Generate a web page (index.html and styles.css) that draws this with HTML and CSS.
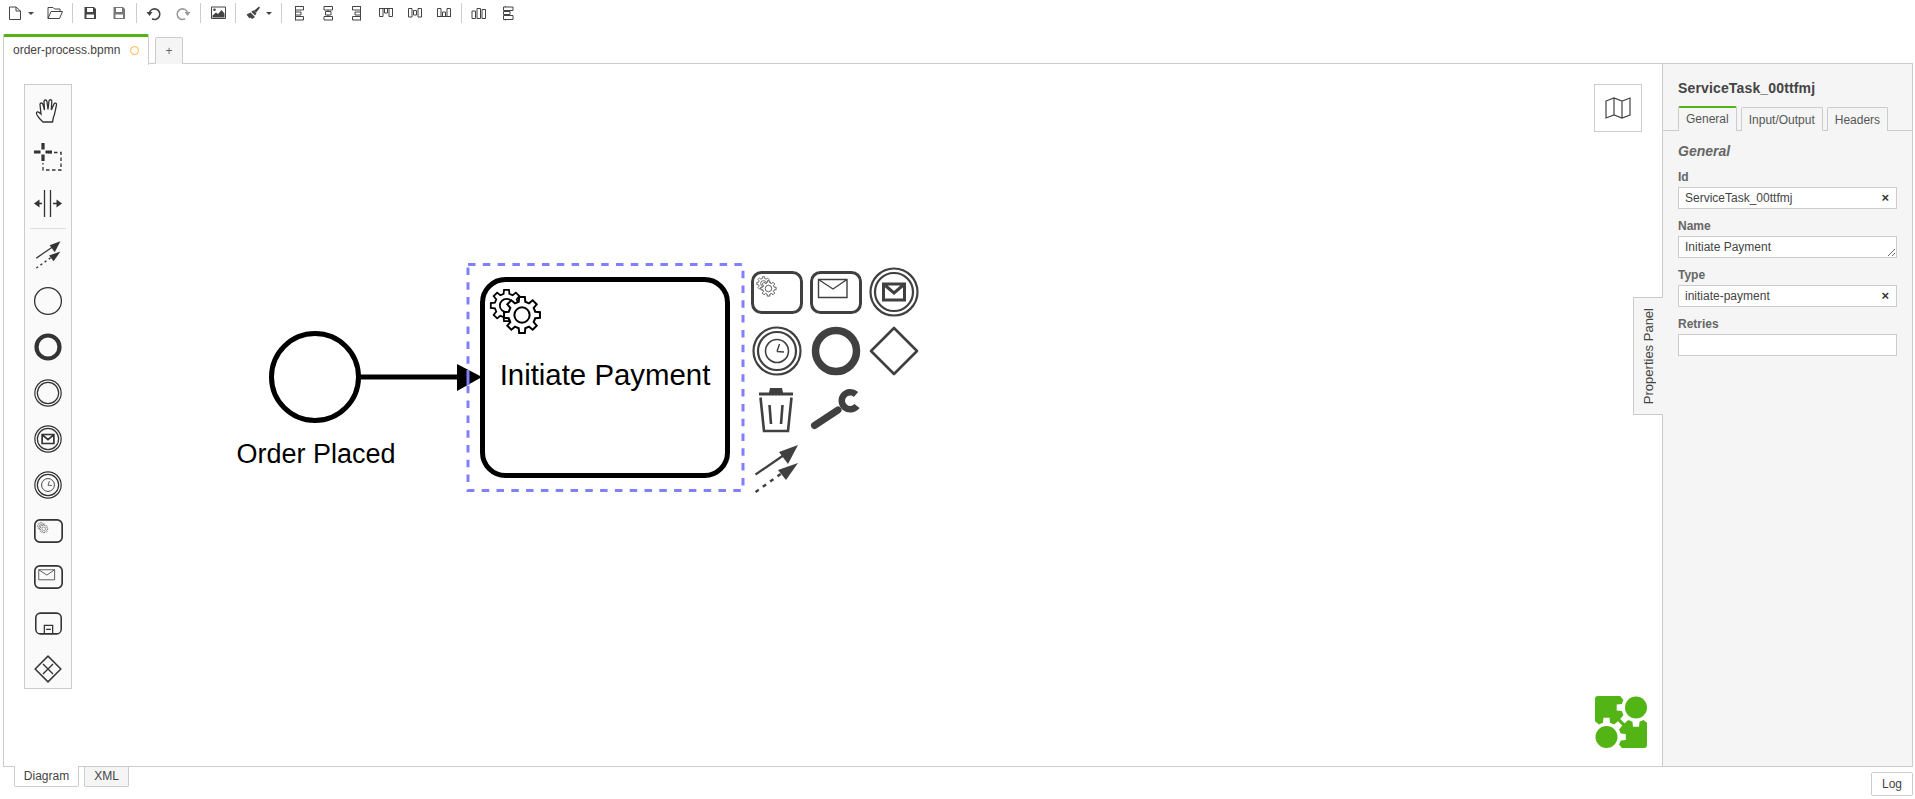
FILE: index.html
```html
<!DOCTYPE html>
<html lang="en">
<head>
    <meta charset="UTF-8">
    <title>order-process.bpmn</title>
    <link rel="stylesheet" href="styles.css">
</head>
<body>
    <!-- shared shapes for palette and context pad -->
    <svg class="defs">
        <symbol id="gear" viewBox="-11 -11 22 22">
            <polygon points="7.28,-1.81 9.88,-1.56 9.88,1.56 7.28,1.81 6.43,3.87 8.09,5.88 5.88,8.09 3.87,6.43 1.81,7.28 1.56,9.88 -1.56,9.88 -1.81,7.28 -3.87,6.43 -5.88,8.09 -8.09,5.88 -6.43,3.87 -7.28,1.81 -9.88,1.56 -9.88,-1.56 -7.28,-1.81 -6.43,-3.87 -8.09,-5.88 -5.88,-8.09 -3.87,-6.43 -1.81,-7.28 -1.56,-9.88 1.56,-9.88 1.81,-7.28 3.87,-6.43 5.88,-8.09 8.09,-5.88 6.43,-3.87"/>
            <circle r="4.2"/>
        </symbol>
        <symbol id="service-task" viewBox="0 0 52 43">
            <rect x="1.5" y="1.5" width="49" height="40" rx="9" fill="none" stroke-width="3"/>
            <use href="#gear" x="5" y="5" width="15" height="15" stroke-width="1.1" fill="none"/>
            <use href="#gear" x="9" y="9" width="17" height="17" stroke-width="1.1" fill="#fff"/>
        </symbol>
        <symbol id="message-task" viewBox="0 0 52 43">
            <rect x="1.5" y="1.5" width="49" height="40" rx="9" fill="none" stroke-width="3"/>
            <path d="M8.5 8.5H37V26.5H8.5ZM8.5 8.5L23 18L37 8.5" fill="none" stroke-width="1.4"/>
        </symbol>
        <symbol id="sub-process" viewBox="0 0 52 43">
            <rect x="1.5" y="1.5" width="49" height="40" rx="9" fill="none" stroke-width="3"/>
            <path d="M18 41V25H34V41M21.5 33H30.5" fill="none" stroke-width="2.4"/>
        </symbol>
        <symbol id="rings" viewBox="0 0 50 50">
            <circle cx="25" cy="25" r="23.5" fill="none" stroke-width="2.2"/>
            <circle cx="25" cy="25" r="19" fill="none" stroke-width="2.2"/>
        </symbol>
        <symbol id="message-event" viewBox="0 0 50 50">
            <use href="#rings" width="50" height="50"/>
            <path d="M14.5 17H35.5V33H14.5ZM14.5 17L25 26L35.5 17" fill="none" stroke-width="3"/>
        </symbol>
        <symbol id="timer-event" viewBox="0 0 50 50">
            <use href="#rings" width="50" height="50"/>
            <circle cx="25" cy="25" r="11.5" fill="none" stroke-width="1.6"/>
            <path d="M25 25.5L27.5 18M25 25.5L32 26" fill="none" stroke-width="1.4"/>
        </symbol>
        <symbol id="end-event" viewBox="0 0 50 50">
            <circle cx="25" cy="25" r="20.5" fill="none" stroke-width="7.5"/>
        </symbol>
        <symbol id="gateway" viewBox="0 0 50 50">
            <path d="M25 2L48 25L25 48L2 25Z" fill="none" stroke-width="2.6" stroke-linejoin="round"/>
        </symbol>
        <symbol id="connect" viewBox="0 0 44 48">
            <path d="M0.5 29.5L29 10" fill="none" stroke-width="2.2"/>
            <path d="M43 0L33 19L24 7Z" stroke="none"/>
            <path d="M0.5 47L27 28" fill="none" stroke-width="2.4" stroke-dasharray="4 5"/>
            <path d="M43 18L31 35L23 25Z" stroke="none"/>
        </symbol>
    </svg>

    <div class="toolbar">
        <div class="tool-group first">
            <button class="tool tool-wide">
                <svg class="ico" viewBox="0 0 18 18"><path d="M3.5 3H10L14.5 7V15.5H3.5ZM10 3V7H14.5"/></svg>
                <span class="caret"></span>
            </button>
            <button class="tool">
                <svg class="ico" viewBox="0 0 18 18"><path d="M2 14.5V3.5H7L8.5 5H14V7.5M2 14.5L5 7.5H16.5L13.5 14.5Z"/></svg>
            </button>
        </div>
        <div class="tool-group">
            <button class="tool">
                <svg class="ico solid" viewBox="0 0 18 18"><path fill-rule="evenodd" d="M3.5 3H13L15 5V15H3.5ZM6 4V8H12V4ZM5.5 10.5V14H13V10.5Z"/></svg>
            </button>
            <button class="tool">
                <svg class="ico solid soft" viewBox="0 0 18 18"><path fill-rule="evenodd" d="M3.5 3H13L15 5V15H3.5ZM6 4V8H12V4ZM5.5 10.5V14H13V10.5Z"/></svg>
            </button>
        </div>
        <div class="tool-group">
            <button class="tool">
                <svg class="ico thick" viewBox="0 0 18 18"><path d="M4.5 8.5A5.3 5.3 0 1 1 7 14.8"/><path class="fill" d="M1.5 8H7.5L4.5 12Z"/></svg>
            </button>
            <button class="tool">
                <svg class="ico thick faded" viewBox="0 0 18 18"><path d="M13.5 8.5A5.3 5.3 0 1 0 11 14.8"/><path class="fill" d="M16.5 8H10.5L13.5 12Z"/></svg>
            </button>
        </div>
        <div class="tool-group">
            <button class="tool">
                <svg class="ico" viewBox="0 0 18 18"><path d="M2.5 3H16.5V14.5H2.5Z"/><path class="fill" d="M3.5 13.5V11.5L7 8.5L9 10L12.5 6L15.5 9.5V13.5Z"/><circle class="fill" cx="5.5" cy="5.8" r="1.3"/></svg>
            </button>
        </div>
        <div class="tool-group">
            <button class="tool tool-brush">
                <svg class="ico solid" viewBox="0 0 18 18"><path d="M15 2.5L16 3.8L12 8.8L10 6.8ZM9.3 6.3L12.5 9.5L11 11.5L7.3 7.8ZM6.5 8.5L11 13L8 15L6.5 13.5L5.5 14.5L2.5 10.5Z"/></svg>
                <span class="caret"></span>
            </button>
        </div>
        <div class="tool-group">
            <button class="tool"><svg class="ico" viewBox="0 0 18 18"><path d="M5.5 2V16.5M5.5 2.5H13.5V6H5.5M5.5 8H11V11H5.5M5.5 12.5H13.5V16H5.5"/></svg></button>
            <button class="tool"><svg class="ico" viewBox="0 0 18 18"><path d="M5 2.5H13.5V6H5ZM6.5 7.5H12V11H6.5ZM5 12.5H13.5V16H5ZM9 6V7.5M9 11V12.5"/></svg></button>
            <button class="tool"><svg class="ico" viewBox="0 0 18 18"><path d="M12.5 2V16.5M12.5 2.5H4.5V6H12.5M12.5 8H7V11H12.5M12.5 12.5H4.5V16H12.5"/></svg></button>
            <button class="tool"><svg class="ico" viewBox="0 0 18 18"><path d="M2 4.5H16M2.5 4.5V12.5H6V4.5M7.5 4.5V9H10.5V4.5M12 4.5V12.5H15.5V4.5"/></svg></button>
            <button class="tool"><svg class="ico" viewBox="0 0 18 18"><path d="M2.5 4.5H6V13H2.5ZM7.5 6.5H10.5V11H7.5ZM12 4.5H15.5V13H12Z"/></svg></button>
            <button class="tool"><svg class="ico" viewBox="0 0 18 18"><path d="M2 12.5H16M2.5 12.5V4.5H6V12.5M7.5 12.5V8H10.5V12.5M12 12.5V4.5H15.5V12.5"/></svg></button>
        </div>
        <div class="tool-group last">
            <button class="tool"><svg class="ico" viewBox="0 0 18 18"><path d="M2 7H5.5V14.5H2ZM7 4.5H10.5V14.5H7ZM12 5.5H15.5V14.5H12Z"/></svg></button>
            <button class="tool"><svg class="ico" viewBox="0 0 18 18"><path d="M4.5 3H14V6.5H4.5ZM4.5 7.5H11V10.5H4.5ZM4.5 11.5H14V15.5H4.5ZM6.5 6.5V7.5M6.5 10.5V11.5M6.5 2V3M6.5 15.5V16.5"/></svg></button>
        </div>
    </div>

    <div class="tab-bar">
        <div class="file-tab active">order-process.bpmn<span class="dirty"></span></div>
        <div class="file-tab add">+</div>
    </div>

    <div class="workspace">
        <div class="canvas">
            <svg class="diagram" width="1658" height="703">
                <g transform="translate(-4 -64)">
                    <rect class="selection" x="468" y="264.5" width="275" height="226"/>
                    <circle class="shape" cx="315" cy="377" r="43.5"/>
                    <path class="flow" d="M360 377H460"/>
                    <rect class="shape" x="482.5" y="279.5" width="245" height="196" rx="23"/>
                    <path class="arrow" d="M457 364L482 377L457 391Z"/>
                    <path class="selection-over" d="M468 370V385"/>
                    <use class="gear-big" href="#gear" x="489" y="288" width="35" height="35" fill="none"/>
                    <use class="gear-big" href="#gear" x="502" y="295" width="40" height="40" fill="#fff"/>
                    <text class="label" x="605" y="385" font-size="29.4">Initiate Payment</text>
                    <text class="label" x="316" y="463" font-size="27">Order Placed</text>

                    <g class="pad">
                        <use href="#service-task" x="751" y="271" width="52" height="43"/>
                        <use href="#message-task" x="810" y="271" width="52" height="43"/>
                        <use href="#message-event" x="869" y="267" width="50" height="50"/>
                        <use href="#timer-event" x="752" y="326" width="50" height="50"/>
                        <use href="#end-event" x="811" y="326" width="50" height="50"/>
                        <use href="#gateway" x="869" y="326" width="50" height="50"/>
                        <g transform="translate(758 388)">
                            <path class="trash-fill" d="M12 0H24L25 4.5H35V7.5H1V4.5H11Z"/>
                            <path class="trash" d="M2.5 9.5L6 43H30L33.5 9.5M11.5 17L13 36M24.5 17L23 36"/>
                        </g>
                        <g transform="translate(811 391)">
                            <path class="wrench" d="M3.5 34.5L27 19"/>
                            <path class="wrench-head" d="M45 3.5A8.5 8.5 0 1 0 46 15"/>
                        </g>
                        <use href="#connect" x="755" y="445" width="44" height="48"/>
                    </g>

                    <g class="logo">
                        <rect class="logo-bg" x="1595" y="696" width="52" height="52" rx="3"/>
                        <use class="logo-gear" href="#gear" x="1614.5" y="686" width="43" height="43"/>
                        <use class="logo-gear" href="#gear" x="1585" y="715.5" width="43" height="43"/>
                        <circle class="logo-bg" cx="1636" cy="707.5" r="11"/>
                        <circle class="logo-bg" cx="1606.5" cy="737" r="11"/>
                    </g>
                </g>
            </svg>

            <div class="palette">
                <div class="pal-item">
                    <svg class="pal-ico line" viewBox="0 0 38 38"><path d="M14 30L11 27C9 24.5 7 22.5 7.5 20.5C8.5 19 10.5 20.5 12 22L11 12.5C11 10.5 13.5 10.5 14 12.5L15.5 18L15 9.5C15 7.5 17.5 7.5 18 9.5L19 17.5L20 9C20.3 7 23 7.5 22.8 9.5L22.3 18L25 12C25.7 10.5 28 11 27.5 13C26.5 17 26 22 24.5 25L23.5 30Z"/></svg>
                </div>
                <div class="pal-item">
                    <svg class="pal-ico line" viewBox="0 0 38 38"><path class="plus" d="M14 5V11.5M14 16.5V23M5 14H11.5M16.5 14H23"/><path d="M19 14.5H32V32H14V25" stroke-dasharray="3.5 2.5"/></svg>
                </div>
                <div class="pal-item">
                    <svg class="pal-ico line" viewBox="0 0 38 38"><path d="M15.5 6V33M21.5 6V33M9 19.5H13M24 19.5H28"/><path class="fill" d="M5 19.5L10.5 15.5V23.5ZM33 19.5L27.5 15.5V23.5Z"/></svg>
                </div>
                <div class="pal-sep"></div>
                <div class="pal-item"><svg class="pal-use" width="25" height="28"><use href="#connect" width="25" height="28"/></svg></div>
                <div class="pal-item"><svg class="pal-ico line" viewBox="0 0 38 38"><circle cx="19" cy="19" r="13.4"/></svg></div>
                <div class="pal-item"><svg class="pal-use" width="28" height="28"><use href="#end-event" width="28" height="28"/></svg></div>
                <div class="pal-item"><svg class="pal-use" width="28" height="28"><use href="#rings" width="28" height="28"/></svg></div>
                <div class="pal-item"><svg class="pal-use" width="28" height="28"><use href="#message-event" width="28" height="28"/></svg></div>
                <div class="pal-item"><svg class="pal-use" width="28" height="28"><use href="#timer-event" width="28" height="28"/></svg></div>
                <div class="pal-item"><svg class="pal-use" width="29" height="24"><use href="#service-task" width="29" height="24"/></svg></div>
                <div class="pal-item"><svg class="pal-use" width="29" height="24"><use href="#message-task" width="29" height="24"/></svg></div>
                <div class="pal-item"><svg class="pal-use" width="27" height="23"><use href="#sub-process" width="27" height="23"/></svg></div>
                <div class="pal-item">
                    <svg class="pal-use" width="28" height="28"><use href="#gateway" width="28" height="28"/><path class="cross" d="M9 9L19 19M19 9L9 19"/></svg>
                </div>
            </div>

            <div class="minimap-toggle">
                <svg class="map-ico" viewBox="0 0 26 22"><path d="M1 4L9 1L17 4L25 1V18L17 21L9 18L1 21ZM9 1V18M17 4V21"/></svg>
            </div>
        </div>

        <div class="props">
            <div class="props-toggle"><span>Properties Panel</span></div>
            <div class="props-title">ServiceTask_00ttfmj</div>
            <div class="props-tabs">
                <div class="props-tab active">General</div>
                <div class="props-tab">Input/Output</div>
                <div class="props-tab">Headers</div>
            </div>
            <div class="props-body">
                <div class="group-title">General</div>
                <div class="field">
                    <label>Id</label>
                    <div class="input-wrap"><input type="text" value="ServiceTask_00ttfmj"><span class="clear">×</span></div>
                </div>
                <div class="field">
                    <label>Name</label>
                    <div class="input-wrap"><textarea>Initiate Payment</textarea></div>
                </div>
                <div class="field">
                    <label>Type</label>
                    <div class="input-wrap"><input type="text" value="initiate-payment"><span class="clear">×</span></div>
                </div>
                <div class="field">
                    <label>Retries</label>
                    <div class="input-wrap"><input type="text"></div>
                </div>
            </div>
        </div>
    </div>

    <div class="footer">
        <div class="sheet-tabs">
            <div class="sheet-tab active">Diagram</div>
            <div class="sheet-tab">XML</div>
        </div>
        <button class="log-btn">Log</button>
    </div>
</body>
</html>
```

FILE: styles.css
```css
* {
    box-sizing: border-box;
}

html, body {
    margin: 0;
    height: 100%;
    overflow: hidden;
}

body {
    display: flex;
    flex-direction: column;
    font-family: "Liberation Sans", Arial, sans-serif;
    font-size: 12px;
    color: #444;
    background: #fff;
}

.defs {
    display: none;
}

/* top toolbar */
.toolbar {
    display: flex;
    align-items: center;
    height: 26px;
    margin-top: 0;
    padding-left: 3.5px;
}

.tool-group {
    display: flex;
    height: 20px;
    padding: 0 2.5px;
    border-right: 1px solid #ccc;
}

.tool-group.first {
    padding-left: 0;
}

.tool-group.last {
    border-right: none;
}

.tool {
    display: flex;
    align-items: center;
    justify-content: center;
    width: 29px;
    height: 20px;
    padding: 0;
    background: none;
    border: none;
}

.tool-wide {
    width: 37px;
    justify-content: flex-start;
    padding-left: 2px;
}

.tool-brush {
    width: 39.5px;
    justify-content: flex-start;
    padding-left: 5px;
    gap: 4px;
}

.ico {
    width: 18px;
    height: 18px;
    fill: none;
    stroke: #444;
    stroke-width: 1;
}

.ico.thick {
    stroke-width: 1.6;
}

.ico .fill {
    fill: #444;
    stroke: none;
}

.ico.solid {
    fill: #444;
    stroke: none;
}

.ico.soft {
    fill: #777;
}

.ico.faded {
    stroke: #999;
}

.ico.faded .fill {
    fill: #999;
}

.caret {
    width: 0;
    height: 0;
    margin-left: 4px;
    border-top: 3px solid #444;
    border-left: 3px solid transparent;
    border-right: 3px solid transparent;
}

.tool-brush .caret {
    margin-left: 0;
}

/* file tabs */
.tab-bar {
    display: flex;
    align-items: flex-end;
    gap: 6px;
    height: 38px;
    padding-left: 3px;
    margin-bottom: -1px;
    position: relative;
    z-index: 1;
}

.file-tab {
    display: flex;
    align-items: center;
    height: 27px;
    padding: 0 9px;
    background: #f5f5f5;
    border: 1px solid #ccc;
    border-bottom: none;
    border-radius: 2px 2px 0 0;
    white-space: nowrap;
}

.file-tab.active {
    height: 31px;
    width: 146px;
    background: #fff;
    border-top: 3px solid #52b415;
    padding-right: 0;
    padding-bottom: 2px;
    margin-bottom: -1px;
}

.file-tab.add {
    width: 28px;
    justify-content: center;
    padding: 0;
    color: #666;
}

.dirty {
    flex: none;
    width: 9px;
    height: 9px;
    margin-left: 10px;
    border: 1.5px solid #ffb33e;
    border-radius: 50%;
}

/* main area */
.workspace {
    flex: 1;
    display: flex;
    margin: 0 2px 0 3px;
    border: 1px solid #ccc;
    min-height: 0;
}

.canvas {
    flex: 1;
    position: relative;
    overflow: hidden;
}

.diagram {
    display: block;
}

.selection {
    fill: none;
    stroke: #8080ff;
    stroke-width: 3;
    stroke-dasharray: 7.5 7.3;
}

.selection-over {
    stroke: #8080ff;
    stroke-width: 3;
}

.shape {
    fill: #fff;
    stroke: #000;
    stroke-width: 5;
}

.flow {
    stroke: #000;
    stroke-width: 5;
    fill: none;
}

.arrow {
    fill: #000;
}

.gear-big {
    stroke: #000;
    stroke-width: 1.1;
}

.label {
    font-family: "Liberation Sans", Arial, sans-serif;
    fill: #000;
    text-anchor: middle;
}

.pad {
    fill: #404040;
    stroke: #404040;
}

.trash-fill {
    stroke: none;
}

.trash {
    fill: none;
    stroke-width: 2.6;
}

.wrench {
    fill: none;
    stroke-width: 7;
    stroke-linecap: round;
}

.wrench-head {
    fill: none;
    stroke-width: 6.5;
}

.logo-bg {
    fill: #52b415;
}

.logo-gear {
    fill: #fff;
    stroke: none;
}

/* palette on the left of the canvas */
.palette {
    position: absolute;
    left: 20px;
    top: 20px;
    width: 48px;
    display: flex;
    flex-direction: column;
    gap: 8px;
    padding: 7px 0 0;
    background: #fafafa;
    border: 1px solid #ccc;
    fill: #333;
    stroke: #333;
}

.pal-item {
    display: flex;
    align-items: center;
    justify-content: center;
    height: 38px;
}

.pal-sep {
    height: 1px;
    margin: -2px 5px -1px;
    background: #ddd;
}

.pal-ico {
    width: 38px;
    height: 38px;
}

.pal-ico.line {
    fill: none;
    stroke-width: 1.3;
}

.pal-ico .fill {
    fill: #333;
    stroke: none;
}

.pal-ico .plus {
    stroke-width: 3.2;
    stroke-dasharray: none;
}

.cross {
    fill: none;
    stroke-width: 1.4;
}

.minimap-toggle {
    position: absolute;
    right: 20px;
    top: 20px;
    width: 48px;
    height: 48px;
    display: flex;
    align-items: center;
    justify-content: center;
    background: #fff;
    border: 1px solid #ccc;
}

.map-ico {
    width: 26px;
    height: 22px;
    fill: none;
    stroke: #444;
    stroke-width: 1.2;
}

/* properties panel */
.props {
    position: relative;
    width: 250px;
    padding-left: 15px;
    padding-right: 15px;
    background: #f5f5f5;
    border-left: 1px solid #ccc;
}

.props-toggle {
    position: absolute;
    left: -30px;
    top: 233px;
    width: 30px;
    height: 118px;
    display: flex;
    align-items: center;
    justify-content: center;
    background: #f5f5f5;
    border: 1px solid #ccc;
    border-right: none;
    font-size: 13px;
}

.props-toggle span {
    white-space: nowrap;
    writing-mode: vertical-rl;
    transform: rotate(180deg);
}

.props-title {
    margin-top: 16px;
    font-size: 14px;
    line-height: 16px;
    font-weight: bold;
    letter-spacing: 0.15px;
}

.props-tabs {
    display: flex;
    gap: 4px;
    height: 25px;
    margin: 10px -15px 0;
    padding-left: 15px;
    border-bottom: 1px solid #ccc;
}

.props-tab {
    height: 24px;
    margin-top: 1px;
    padding: 0 7px;
    line-height: 24px;
    background: #f5f5f5;
    border: 1px solid #ccc;
    border-bottom: none;
    border-radius: 2px 2px 0 0;
    color: #555;
}

.props-tab.active {
    height: 25px;
    margin-top: 0;
    border-top: 2px solid #52b415;
    line-height: 23px;
}

.group-title {
    margin-top: 12px;
    height: 17px;
    line-height: 17px;
    font-size: 14px;
    font-weight: bold;
    font-style: italic;
    color: #666;
}

.field {
    margin-bottom: 8px;
}

.props-body .group-title + .field {
    margin-top: 8px;
}

.field label {
    display: block;
    height: 18px;
    line-height: 18px;
    margin-bottom: 1px;
    font-weight: bold;
    color: #666;
}

.input-wrap {
    position: relative;
    height: 22px;
}

.input-wrap input,
.input-wrap textarea {
    display: block;
    width: 100%;
    height: 22px;
    margin: 0;
    padding: 2px 6px;
    background: #fff;
    border: 1px solid #ccc;
    border-radius: 0;
    font-family: "Liberation Sans", Arial, sans-serif;
    font-size: 12px;
    line-height: 16px;
    color: #444;
}

.input-wrap textarea {
    resize: vertical;
    overflow: hidden;
}

.clear {
    position: absolute;
    right: 8px;
    top: 3px;
    font-size: 13px;
    line-height: 16px;
    font-weight: bold;
    color: #333;
}

/* bottom bar */
.footer {
    display: flex;
    justify-content: space-between;
    align-items: flex-start;
    height: 32px;
    padding: 0 2px 0 14px;
}

.sheet-tabs {
    display: flex;
    gap: 5px;
}

.sheet-tab {
    width: 45px;
    height: 20px;
    margin-top: 0;
    line-height: 19px;
    text-align: center;
    background: #f5f5f5;
    border: 1px solid #ccc;
    border-top: none;
    border-radius: 0 0 2px 2px;
}

.sheet-tab.active {
    width: 65px;
    margin-top: -1px;
    height: 21px;
    line-height: 21px;
    background: #fff;
}

.log-btn {
    width: 42px;
    height: 24px;
    margin-top: 5px;
    padding: 0;
    background: #fff;
    border: 1px solid #ccc;
    border-radius: 2px;
    font-family: "Liberation Sans", Arial, sans-serif;
    font-size: 12px;
    color: #444;
}
```
